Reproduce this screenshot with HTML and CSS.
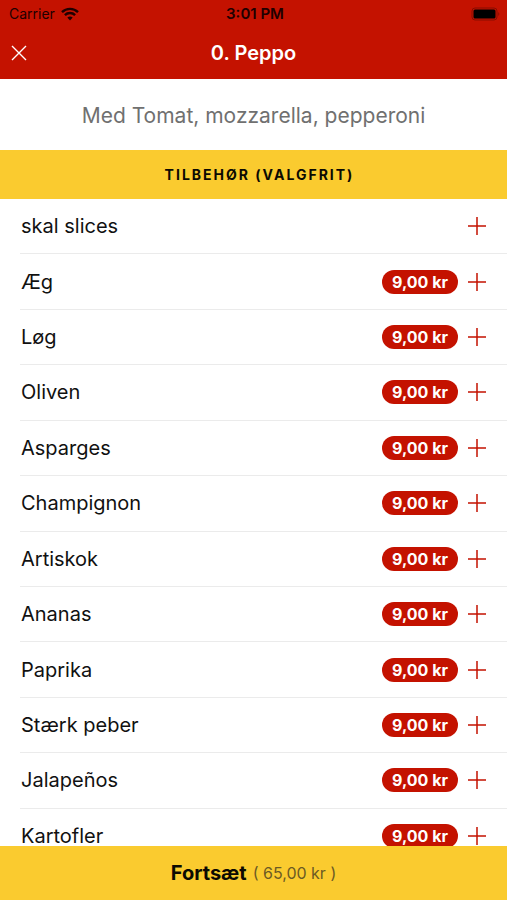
FILE: index.html
```html
<!DOCTYPE html>
<html lang="da">
<head>
    <meta charset="UTF-8">
    <meta name="viewport" content="width=device-width, initial-scale=1.0">
    <title>0. Peppo</title>
    <link rel="stylesheet" href="styles.css">
</head>
<body>
    <!-- Header -->
    <header class="header">
        <div class="status-bar">
            <div class="carrier">
                <span>Carrier</span>
                <svg class="wifi" viewBox="0 0 18 14" aria-hidden="true">
                    <path d="M1 5.2C5.400 .8 12.600 .8 17 5.200" />
                    <path d="M3.900 8.100C6.700 5.300 11.300 5.300 14.100 8.100" />
                    <path class="wifi-dot" d="M6.300 10.500Q9 8.300 11.700 10.500L9 13.400Z" />
                </svg>
            </div>
            <span class="clock">3:01 PM</span>
            <svg class="battery" viewBox="0 0 30 14" aria-hidden="true">
                <rect class="battery-case" x="1" y="1" width="25" height="12" rx="3" />
                <rect x="2.500" y="2.500" width="22" height="9" rx="1.500" />
                <path class="battery-tip" d="M27.300 5Q29.300 7 27.300 9Z" />
            </svg>
        </div>
        <div class="title-bar">
            <button class="close" type="button" aria-label="Luk">
                <svg viewBox="0 0 16 16"><path d="M1 1L15 15M15 1L1 15" /></svg>
            </button>
            <h1>0. Peppo</h1>
        </div>
    </header>

    <p class="description">Med Tomat, mozzarella, pepperoni</p>
    <h2 class="section-title">TILBEHØR (VALGFRIT)</h2>

    <!-- Toppings -->
    <main class="toppings">
        <ul class="list">
            <li class="item">
                <span class="name">skal slices</span>
                <button class="add" type="button" aria-label="Tilføj skal slices"><svg viewBox="0 0 18 18"><path d="M9 0V18M0 9H18" /></svg></button>
            </li>
            <li class="item">
                <span class="name">Æg</span>
                <span class="price">9,00 kr</span>
                <button class="add" type="button" aria-label="Tilføj Æg"><svg viewBox="0 0 18 18"><path d="M9 0V18M0 9H18" /></svg></button>
            </li>
            <li class="item">
                <span class="name">Løg</span>
                <span class="price">9,00 kr</span>
                <button class="add" type="button" aria-label="Tilføj Løg"><svg viewBox="0 0 18 18"><path d="M9 0V18M0 9H18" /></svg></button>
            </li>
            <li class="item">
                <span class="name">Oliven</span>
                <span class="price">9,00 kr</span>
                <button class="add" type="button" aria-label="Tilføj Oliven"><svg viewBox="0 0 18 18"><path d="M9 0V18M0 9H18" /></svg></button>
            </li>
            <li class="item">
                <span class="name">Asparges</span>
                <span class="price">9,00 kr</span>
                <button class="add" type="button" aria-label="Tilføj Asparges"><svg viewBox="0 0 18 18"><path d="M9 0V18M0 9H18" /></svg></button>
            </li>
            <li class="item">
                <span class="name">Champignon</span>
                <span class="price">9,00 kr</span>
                <button class="add" type="button" aria-label="Tilføj Champignon"><svg viewBox="0 0 18 18"><path d="M9 0V18M0 9H18" /></svg></button>
            </li>
            <li class="item">
                <span class="name">Artiskok</span>
                <span class="price">9,00 kr</span>
                <button class="add" type="button" aria-label="Tilføj Artiskok"><svg viewBox="0 0 18 18"><path d="M9 0V18M0 9H18" /></svg></button>
            </li>
            <li class="item">
                <span class="name">Ananas</span>
                <span class="price">9,00 kr</span>
                <button class="add" type="button" aria-label="Tilføj Ananas"><svg viewBox="0 0 18 18"><path d="M9 0V18M0 9H18" /></svg></button>
            </li>
            <li class="item">
                <span class="name">Paprika</span>
                <span class="price">9,00 kr</span>
                <button class="add" type="button" aria-label="Tilføj Paprika"><svg viewBox="0 0 18 18"><path d="M9 0V18M0 9H18" /></svg></button>
            </li>
            <li class="item">
                <span class="name">Stærk peber</span>
                <span class="price">9,00 kr</span>
                <button class="add" type="button" aria-label="Tilføj Stærk peber"><svg viewBox="0 0 18 18"><path d="M9 0V18M0 9H18" /></svg></button>
            </li>
            <li class="item">
                <span class="name">Jalapeños</span>
                <span class="price">9,00 kr</span>
                <button class="add" type="button" aria-label="Tilføj Jalapeños"><svg viewBox="0 0 18 18"><path d="M9 0V18M0 9H18" /></svg></button>
            </li>
            <li class="item">
                <span class="name">Kartofler</span>
                <span class="price">9,00 kr</span>
                <button class="add" type="button" aria-label="Tilføj Kartofler"><svg viewBox="0 0 18 18"><path d="M9 0V18M0 9H18" /></svg></button>
            </li>
        </ul>
    </main>

    <!-- Continue -->
    <button class="continue" type="button">
        <strong>Fortsæt</strong>
        <span class="total">( 65,00 kr )</span>
    </button>
</body>
</html>
```

FILE: styles.css
```css
* {
    box-sizing: border-box;
}

body {
    display: flex;
    flex-direction: column;
    height: 100vh;
    margin: 0;
    font-family: Inter, sans-serif;
    background: #fff;
    color: #111;
}

button {
    padding: 0;
    border: none;
    background: none;
    font-family: inherit;
    cursor: pointer;
}

svg {
    display: block;
}

.header {
    background: #c41200;
    color: #fff;
}

.status-bar {
    display: grid;
    grid-template-columns: 1fr auto 1fr;
    align-items: center;
    height: 27px;
    padding: 0 6px 0 9px;
    font-size: 14px;
    color: #200000;
}

.carrier {
    display: flex;
    align-items: center;
    gap: 6px;
}

.wifi {
    width: 18px;
    height: 14px;
    fill: none;
    stroke: #200000;
    stroke-width: 2.4;
}

.wifi-dot {
    fill: #200000;
    stroke: none;
}

.clock {
    font-size: 15px;
    font-weight: 600;
}

.battery {
    justify-self: end;
    width: 30px;
    height: 14px;
    fill: #000;
}

.battery-case {
    fill: none;
    stroke: #870c00;
}

.battery-tip {
    fill: #870c00;
}

.title-bar {
    display: grid;
    grid-template-columns: 40px 1fr 40px;
    align-items: center;
    height: 52px;
}

.title-bar h1 {
    margin: 0;
    font-size: 20px;
    font-weight: 600;
    text-align: center;
}

.close {
    padding: 11px;
}

.close svg {
    width: 16px;
    height: 16px;
    stroke: #fff;
    stroke-width: 1.4;
}

.description {
    margin: 0;
    padding: 24px 20px 22px;
    font-size: 21px;
    line-height: 25px;
    text-align: center;
    color: #707070;
}

.section-title {
    margin: 0;
    padding: 15px 20px 14px 32px;
    font-size: 14px;
    line-height: 20px;
    letter-spacing: 2px;
    text-align: center;
    background: #facb2f;
    color: #0c0a02;
}

.toppings {
    flex: 1;
    min-height: 0;
    overflow-y: auto;
    scrollbar-width: none;
}

.list {
    display: grid;
    grid-auto-rows: 1fr;
    min-height: calc(100% + 18px);
    margin: 0;
    padding: 0 0 0 20px;
    list-style: none;
}

.item {
    display: flex;
    align-items: center;
    gap: 10px;
    min-height: 48px;
    padding: 0 21px 0 1px;
    border-bottom: 1px solid #ebebeb;
}

.name {
    flex: 1;
    font-size: 20px;
    line-height: 20px;
}

.price {
    padding: 0 10px;
    border-radius: 12px;
    font-size: 16px;
    font-weight: 700;
    line-height: 24px;
    background: #c41200;
    color: #fff;
}

.add svg {
    width: 18px;
    height: 18px;
    stroke: #c41200;
    stroke-width: 1.5;
}

.continue {
    display: flex;
    align-items: center;
    justify-content: center;
    gap: 6px;
    height: 54px;
    font-size: 16px;
    background: #facb2f;
    color: #0c0a02;
}

.continue strong {
    font-size: 20px;
}

.total {
    color: #6b5a24;
}
```
